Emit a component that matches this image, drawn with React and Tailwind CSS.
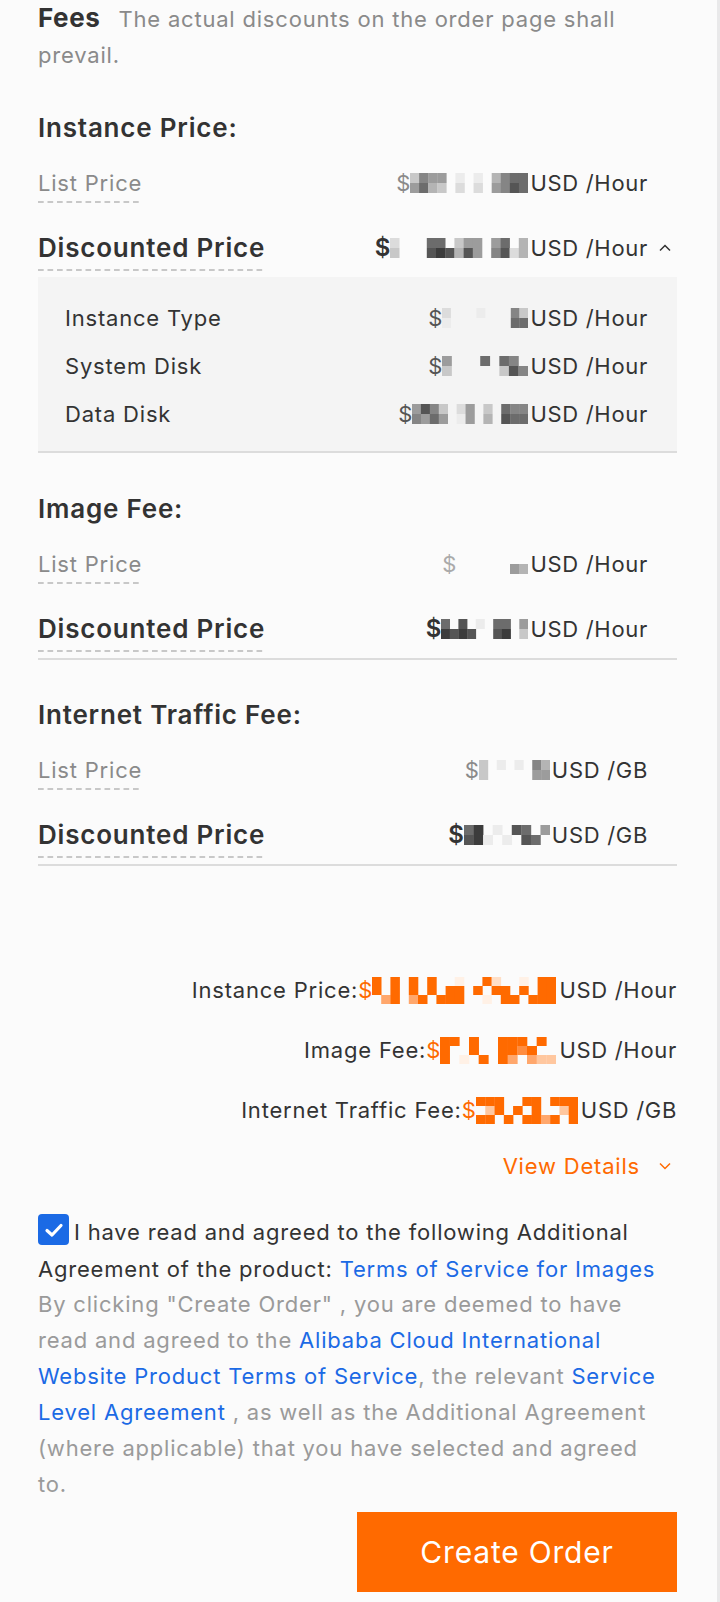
import React from "react";

const GRAY = { 1: "#ececec", 2: "#dcdcdc", 3: "#c8c8c8", 4: "#b4b4b4", 5: "#9c9c9c", 6: "#858585", 7: "#6c6c6c", 8: "#555555", 9: "#3c3c3c" };
const ORANGE = { 1: "#fff1e6", 2: "#ffdfc7", 3: "#ffc79f", 4: "#ffa76c", 5: "#ff8c3f", 6: "#ff7a1c", 7: "#ff6a00", 8: "#f86600", 9: "#f06200" };

function Mosaic({ rows, width, ch = 10, palette = GRAY }) {
  const cols = rows[0].length;
  const cw = width / cols;
  return (
    <svg width={width} height={rows.length * ch} className="block shrink-0">
      {rows.flatMap((r, y) =>
        [...r].map((c, x) =>
          c === "." ? null : (
            <rect key={`${x}-${y}`} x={x * cw} y={y * ch} width={cw + 0.3} height={ch} fill={palette[c]} />
          )
        )
      )}
    </svg>
  );
}

const M = {
  instList: ["3655.1.1.4677", "5743.2.2.5687"],
  instDisc: ["2...77.355.57.4", "3...898485.6824"],
  instType: ["2...1...63", "1.......77"],
  sysDisk: ["5...7.76.", "3.....386"],
  dataDisk: ["5863.25.3.766", "6575.15.4.877"],
  imgList: ["........", "......54"],
  imgDisc: ["7.8.1.77.5", "9898..89.3"],
  trafList: ["3.1.1.64", "3.....55"],
  trafDisc: ["79.1.87.5", "891.1.87.6"],
  sumInst: ["7.7.7.7..1..72..1.77", "7.7.7.7.77.7.77.7.77", ".47.47.777..1.77.777"],
  sumImg: ["77.7..777.7.", "7..7..7757..", "7.1.7.74.433"],
  sumTraf: ["777..77.777", ".37.7.7..37", "77.7.7747.7"],
};

const dash =
  "h-[2px] bg-[image:linear-gradient(90deg,#c8c8c8_0_6px,transparent_6px_9.5px)] bg-[length:9.5px_2px] bg-repeat-x";

function Chevron({ down = false, color = "#333" }) {
  return (
    <svg width="12" height="8" viewBox="0 0 12 8" className="block">
      <polyline
        points={down ? "1,1.5 6,6.5 11,1.5" : "1,6.5 6,1.5 11,6.5"}
        fill="none"
        stroke={color}
        strokeWidth="1.5"
      />
    </svg>
  );
}

function Value({ dollarClass, mosaic, mw, unit = "USD /Hour" }) {
  return (
    <div className="flex items-center">
      <span className={dollarClass}>$</span>
      <Mosaic rows={mosaic} width={mw} />
      <span className="ml-[2px] text-[22px] tracking-[0.7px] text-[#333] whitespace-nowrap">{unit}</span>
    </div>
  );
}

function ListRow({ mosaic, mw, unit, dollarClass = "text-[22px] text-[#8a8a8a]" }) {
  return (
    <div className="mt-[23px] flex items-start justify-between">
      <div className="flex flex-col">
        <span className="text-[22px] leading-[28px] tracking-[0.8px] text-[#8a8a8a] whitespace-nowrap">List Price</span>
        <div className={`mt-[4px] ${dash}`} />
      </div>
      <div className="flex h-[28px] items-center">
        <Value dollarClass={dollarClass} mosaic={mosaic} mw={mw} unit={unit} />
        <div className="w-[29px]" />
      </div>
    </div>
  );
}

function DiscRow({ mosaic, mw, unit, chevron = false }) {
  return (
    <div className="mt-[30px] flex items-start justify-between">
      <div className="flex flex-col">
        <span className="text-[26px] leading-[30px] tracking-[0.8px] font-semibold text-[#333] whitespace-nowrap">
          Discounted Price
        </span>
        <div className={`mt-[6px] ${dash}`} />
      </div>
      <div className="flex h-[30px] items-center">
        <Value dollarClass="text-[24px] font-semibold text-[#333]" mosaic={mosaic} mw={mw} unit={unit} />
        <div className="w-[29px] pl-[11px]">{chevron && <Chevron />}</div>
      </div>
    </div>
  );
}

function DetailRow({ label, mosaic, mw }) {
  return (
    <div className="flex h-[48px] items-center justify-between">
      <span className="text-[22px] tracking-[0.8px] text-[#333]">{label}</span>
      <Value dollarClass="text-[22px] text-[#555]" mosaic={mosaic} mw={mw} />
    </div>
  );
}

function SumRow({ label, mosaic, mw, unit = "USD /Hour", mt = "mt-[24px]" }) {
  return (
    <div className={`${mt} flex h-[36px] items-center justify-end`}>
      <span className="text-[22px] tracking-[0.8px] text-[#333] whitespace-nowrap">{label}</span>
      <span className="text-[22px] text-[#ff6a00]">$</span>
      <Mosaic rows={mosaic} width={mw} ch={9} palette={ORANGE} />
      <span className="ml-[3px] text-[22px] tracking-[0.7px] text-[#333] whitespace-nowrap">{unit}</span>
    </div>
  );
}

const heading = "text-[26px] leading-[36px] tracking-[0.8px] font-semibold text-[#333]";

export default function App() {
  return (
    <div className="flex min-h-[1602px] bg-[#fbfbfb] font-['Inter','Noto_Sans',sans-serif]">
      <div className="w-[717px] pl-[38px] pr-[40px]">
        <p className="text-[22px] leading-[36px] tracking-[0.8px] text-[#8a8a8a] whitespace-nowrap">
          <span className="mr-[18px] text-[26px] tracking-[0.6px] font-bold text-[#333]">Fees</span>
          The actual discounts on the order page shall
          <br />
          prevail.
        </p>

        {/* Instance Price */}
        <div className={`mt-[37px] ${heading}`}>Instance Price:</div>
        <ListRow mosaic={M.instList} mw={118} />
        <DiscRow mosaic={M.instDisc} mw={138} chevron />
        <div className="mt-[6px] border-b-2 border-[#dcdcdc] bg-[#f4f4f4] pl-[27px] pr-[29px] pt-[17px] pb-[13px]">
          <DetailRow label="Instance Type" mosaic={M.instType} mw={86} />
          <DetailRow label="System Disk" mosaic={M.sysDisk} mw={86} />
          <DetailRow label="Data Disk" mosaic={M.dataDisk} mw={116} />
        </div>

        {/* Image Fee */}
        <div className={`mt-[38px] ${heading}`}>Image Fee:</div>
        <ListRow mosaic={M.imgList} mw={72} dollarClass="text-[22px] text-[#aaa]" />
        <DiscRow mosaic={M.imgDisc} mw={87} />
        <div className="mt-[6px] h-[2px] bg-[#dcdcdc]" />

        {/* Internet Traffic Fee */}
        <div className={`mt-[37px] ${heading}`}>Internet Traffic Fee:</div>
        <ListRow mosaic={M.trafList} mw={71} unit="USD /GB" />
        <DiscRow mosaic={M.trafDisc} mw={86} unit="USD /GB" />
        <div className="mt-[6px] h-[2px] bg-[#dcdcdc]" />

        {/* Summary */}
        <SumRow label="Instance Price:" mosaic={M.sumInst} mw={184} mt="mt-[106px]" />
        <SumRow label="Image Fee:" mosaic={M.sumImg} mw={116} />
        <SumRow label="Internet Traffic Fee:" mosaic={M.sumTraf} mw={102} unit="USD /GB" />
        <div className="mt-[20px] flex h-[36px] items-center justify-end pr-[6px]">
          <span className="text-[22px] tracking-[0.8px] text-[#ff6a00]">View Details</span>
          <span className="ml-[19px]">
            <Chevron down color="#ff6a00" />
          </span>
        </div>

        {/* Agreement */}
        <div className="mt-[29px] text-[22px] tracking-[0.8px] text-[#333] whitespace-nowrap">
          <div className="flex h-[39px] items-start">
            <span className="mt-[1px] mr-[5px] flex h-[31px] w-[31px] shrink-0 items-center justify-center rounded-[4px] bg-[#1b6ae5]">
              <svg width="20" height="16" viewBox="0 0 20 16">
                <polyline points="3,8.5 8,13 17,3.5" fill="none" stroke="#fff" strokeWidth="3.2" strokeLinecap="round" strokeLinejoin="round" />
              </svg>
            </span>
            <span className="leading-[39px]">I have read and agreed to the following Additional</span>
          </div>
          <div className="leading-[34px]">
            Agreement of the product: <span className="text-[#1b6ae5]">Terms of Service for Images</span>
          </div>
        </div>
        <p className="text-[22px] leading-[36px] tracking-[0.8px] text-[#9a9a9a] whitespace-nowrap">
          By clicking "Create Order" , you are deemed to have
          <br />
          read and agreed to the <span className="text-[#1b6ae5]">Alibaba Cloud International</span>
          <br />
          <span className="text-[#1b6ae5]">Website Product Terms of Service</span>, the relevant{" "}
          <span className="text-[#1b6ae5]">Service</span>
          <br />
          <span className="text-[#1b6ae5]">Level Agreement</span> , as well as the Additional Agreement
          <br />
          (where applicable) that you have selected and agreed
          <br />
          to.
        </p>
        <div className="mt-[10px] flex justify-end">
          <button className="flex h-[80px] w-[320px] items-center justify-center bg-[#ff6a00] text-[30px] tracking-[0.8px] text-white">
            Create Order
          </button>
        </div>
      </div>
      <div className="w-[3px] bg-[#e9e9ea]" />
    </div>
  );
}
